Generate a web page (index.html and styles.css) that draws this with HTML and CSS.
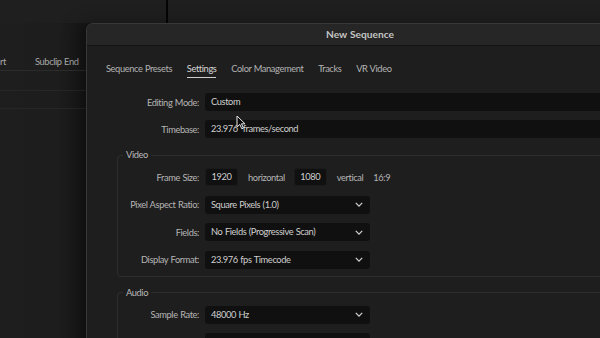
FILE: index.html
```html
<!DOCTYPE html>
<html>
<head>
<meta charset="utf-8">
<link rel="stylesheet" href="styles.css">
</head>
<body>
<div class="app">
  <div class="topbar">
    <div class="pane pane-a"></div>
    <div class="pane pane-b"></div>
  </div>
  <div class="list">
    <div class="list-head">
      <span class="col col-start">Subclip Start</span>
      <span class="col col-end">Subclip End</span>
    </div>
    <div class="list-row"></div>
    <div class="list-row"></div>
  </div>
</div>

<div class="dialog">
  <div class="titlebar">New Sequence</div>
  <div class="tabs">
    <span class="tab">Sequence Presets</span>
    <span class="tab active">Settings</span>
    <span class="tab">Color Management</span>
    <span class="tab">Tracks</span>
    <span class="tab">VR Video</span>
  </div>

  <div class="form">
    <div class="row">
      <span class="label">Editing Mode:</span>
      <div class="field wide">Custom</div>
    </div>
    <div class="row">
      <span class="label">Timebase:</span>
      <div class="field wide">23.976&nbsp; frames/second</div>
    </div>

    <fieldset class="group">
      <legend>Video</legend>
      <div class="row">
        <span class="label">Frame Size:</span>
        <div class="field num">1920</div>
        <span class="unit">horizontal</span>
        <div class="field num">1080</div>
        <span class="unit">vertical</span>
        <span class="unit">16:9</span>
      </div>
      <div class="row">
        <span class="label">Pixel Aspect Ratio:</span>
        <div class="field select">Square Pixels (1.0)<svg class="chev" viewBox="0 0 10 6"><path d="M1 1 L5 5 L9 1"/></svg></div>
      </div>
      <div class="row">
        <span class="label">Fields:</span>
        <div class="field select">No Fields (Progressive Scan)<svg class="chev" viewBox="0 0 10 6"><path d="M1 1 L5 5 L9 1"/></svg></div>
      </div>
      <div class="row">
        <span class="label">Display Format:</span>
        <div class="field select">23.976 fps Timecode<svg class="chev" viewBox="0 0 10 6"><path d="M1 1 L5 5 L9 1"/></svg></div>
      </div>
    </fieldset>

    <fieldset class="group audio">
      <legend>Audio</legend>
      <div class="row">
        <span class="label">Sample Rate:</span>
        <div class="field select">48000 Hz<svg class="chev" viewBox="0 0 10 6"><path d="M1 1 L5 5 L9 1"/></svg></div>
      </div>
      <div class="row">
        <span class="label"></span>
        <div class="field select"></div>
      </div>
    </fieldset>
  </div>
</div>

<svg class="cursor" viewBox="0 0 10 15"><path d="M1 1 L1 12 L3.8 9.4 L5.8 13.8 L7.4 13.1 L5.5 8.8 L9 8.8 Z"/></svg>
</body>
</html>
```

FILE: styles.css
```css
* { box-sizing: border-box; }
html, body {
  margin: 0;
  width: 600px;
  height: 338px;
  overflow: hidden;
  background: #1d1d1d;
  font-family: Lato, "Open Sans", sans-serif;
  font-size: 9.3px;
  letter-spacing: -0.4px;
  word-spacing: 0.5px;
  color: #b9b9b9;
}
.app {
  width: 600px;
  height: 338px;
  background: linear-gradient(90deg, #1e1e1e 0, #1d1d1d 60px, #161616 86px);
}
.topbar {
  display: flex;
  height: 23px;
}
.pane-a { width: 166px; background: #1f1f1f; }
.pane-b { flex: 1; background: #1f1f1f; border-left: 2px solid #050505; }
.list { padding-top: 27px; }
.list-head {
  display: flex;
  height: 21px;
  padding-top: 7px;
  line-height: 10px;
  border-bottom: 1px solid #2c2c2c;
  margin-left: -75px;
  white-space: nowrap;
}
.col { color: #a8a8a8; }
.col-start { width: 81px; text-align: right; }
.col-end { margin-left: 29px; }
.list-row { height: 20px; border-bottom: 1px solid #262626; }
.list-row + .list-row { height: 18px; }

.dialog {
  position: absolute;
  left: 86px;
  top: 23px;
  width: 548px;
  height: 330px;
  background: #1e1e1e;
  border: 1px solid #383838;
  border-bottom: none;
  border-radius: 7px 7px 0 0;
  box-shadow: -6px 0 18px rgba(0,0,0,0.35);
}
.titlebar {
  height: 22px;
  background: #262626;
  border-bottom: 1px solid #141414;
  border-radius: 6px 6px 0 0;
  text-align: center;
  line-height: 21px;
  font-weight: bold;
  font-size: 10.2px;
  color: #c4c4c4;
  letter-spacing: 0;
}
.tabs {
  display: flex;
  gap: 14.8px;
  padding: 14px 0 0 19px;
  height: 47px;
}
.tab {
  height: 18px;
  line-height: 17px;
  color: #b3b3b3;
}
.tab.active {
  color: #d6d6d6;
  border-bottom: 1.5px solid #cfcfcf;
}
.form { padding: 0; }
.row {
  display: flex;
  align-items: center;
  height: 18px;
  margin-bottom: 9.4px;
  white-space: nowrap;
}
.label {
  width: 112px;
  text-align: right;
  margin-right: 6px;
  color: #b5b5b5;
}
.field {
  height: 18px;
  line-height: 18px;
  background: #101010;
  border-radius: 3px;
  color: #cfcfcf;
  padding-left: 6px;
}
.field.wide { flex: 1; margin-right: -40px; }
.field.num {
  width: 33px;
  padding: 0;
  text-align: center;
  border: 1px solid #1a1a1a;
  line-height: 16px;
}
.unit { margin-left: 10px; color: #b5b5b5; }
.unit + .field.num { margin-left: 9px; }
.field.select {
  width: 165px;
  position: relative;
  padding-left: 6px;
}
.chev {
  position: absolute;
  right: 7px;
  top: 6.5px;
  width: 8px;
  height: 5px;
  fill: none;
  stroke: #d0d0d0;
  stroke-width: 1.6;
}
.group {
  margin: 12px -30px 0 30px;
  padding: 8px 0 0 0;
  border: 1px solid #2e2e2e;
  border-radius: 4px;
  min-width: 0;
}
.group .row:last-child { margin-bottom: 7px; }
.group legend {
  margin-left: 5px;
  padding: 0 3px;
  color: #b9b9b9;
  line-height: 10px;
}
.group .label { width: 81px; }
.group.audio { margin-top: 11px; }
.cursor {
  position: absolute;
  left: 236px;
  top: 115px;
  width: 10px;
  height: 15px;
  fill: #0a0a0a;
  stroke: #e8e8e8;
  stroke-width: 1;
}
```
